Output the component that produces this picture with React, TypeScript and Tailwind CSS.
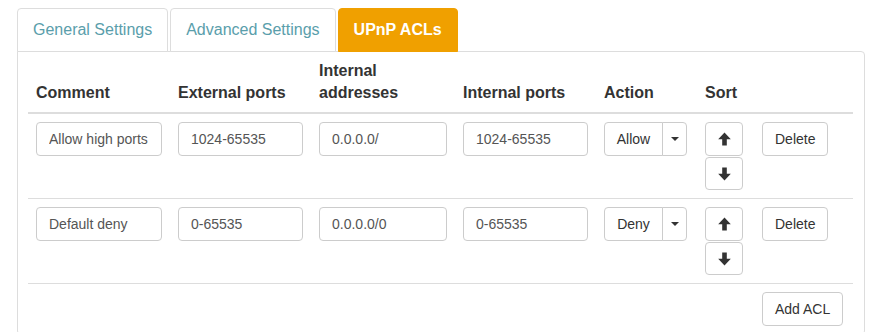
import { type ReactNode } from 'react';

/* UPnP ACL settings tab — bootstrap-ish table */

interface AclRule {
    comment: string;
    extPorts: string;
    intAddr: string;
    intPorts: string;
    action: string;
}

const rules: AclRule[] = [
    { comment: 'Allow high ports', extPorts: '1024-65535', intAddr: '0.0.0.0/', intPorts: '1024-65535', action: 'Allow' },
    { comment: 'Default deny', extPorts: '0-65535', intAddr: '0.0.0.0/0', intPorts: '0-65535', action: 'Deny' },
];

function ArrowUp() {
    return (
        <svg width="13" height="14" viewBox="0 0 13 14" className="fill-[#333]">
            <path d="M6.5 0.5 L12.8 7.2 L8.8 7.2 L8.8 13.5 L4.2 13.5 L4.2 7.2 L0.2 7.2 Z" />
        </svg>
    );
}

function ArrowDown() {
    return (
        <svg width="13" height="14" viewBox="0 0 13 14" className="fill-[#333]">
            <path d="M6.5 13.5 L12.8 6.8 L8.8 6.8 L8.8 0.5 L4.2 0.5 L4.2 6.8 L0.2 6.8 Z" />
        </svg>
    );
}

function Btn({ children, className = 'h-[34px]' }: { children: ReactNode; className?: string }) {
    return (
        <button
            className={`bg-white border border-[#ccc] rounded-[4px] text-[14px] text-[#333] leading-5 ${className}`}
        >
            {children}
        </button>
    );
}

function TextInput({ value }: { value: string }) {
    return (
        <input
            readOnly
            value={value}
            className="block w-full h-[34px] px-3 border border-[#ccc] rounded-[4px] text-[14px] text-[#555] bg-white outline-none"
        />
    );
}

export default function App() {
    const tabs = ['General Settings', 'Advanced Settings'];

    return (
        <div className="w-[877px] h-[332px] overflow-hidden bg-white pl-[17px] pt-[8px] font-['Liberation_Sans',Arial,sans-serif] text-[#333]">
            <ul className="flex gap-[2px] -mb-px relative z-10">
                {tabs.map((t) => (
                    <li
                        key={t}
                        className="px-[15px] py-[10px] leading-[22px] text-[16px] text-[#5a9eab] border border-[#ddd] rounded-t-[4px] bg-white"
                    >
                        {t}
                    </li>
                ))}
                <li className="px-[15px] py-[10px] leading-[22px] text-[16px] font-bold text-white bg-[#f0a000] border border-[#f0a000] rounded-t-[4px]">
                    UPnP ACLs
                </li>
            </ul>

            <div className="w-[848px] border border-[#ddd] rounded-b-[4px] rounded-tr-[4px] px-[10px]">
                <table className="w-[825px] table-fixed border-collapse">
                    <colgroup>
                        <col className="w-[142px]" />
                        <col className="w-[141px]" />
                        <col className="w-[144px]" />
                        <col className="w-[141px]" />
                        <col className="w-[101px]" />
                        <col className="w-[57px]" />
                        <col className="w-[99px]" />
                    </colgroup>
                    <thead>
                        <tr className="border-b-2 border-[#ddd]">
                            {['Comment', 'External ports', 'Internal addresses', 'Internal ports', 'Action', 'Sort', ''].map((h, i) => (
                                <th
                                    key={i}
                                    className="px-2 pt-2 pb-2 text-left align-bottom text-[16px] leading-[22px] font-bold"
                                >
                                    {h}
                                </th>
                            ))}
                        </tr>
                    </thead>
                    <tbody>
                        {rules.map((r) => (
                            <tr key={r.comment} className="border-b border-[#ddd]">
                                <td className="p-2 align-top">
                                    <TextInput value={r.comment} />
                                </td>
                                <td className="p-2 align-top">
                                    <TextInput value={r.extPorts} />
                                </td>
                                <td className="p-2 align-top">
                                    <TextInput value={r.intAddr} />
                                </td>
                                <td className="p-2 align-top">
                                    <TextInput value={r.intPorts} />
                                </td>
                                <td className="p-2 align-top">
                                    <div className="flex">
                                        <Btn className="h-[34px] rounded-r-none w-[59px]">{r.action}</Btn>
                                        <Btn className="h-[34px] rounded-l-none -ml-px w-[25px] flex items-center justify-center">
                                            <span className="block w-0 h-0 border-x-[4px] border-x-transparent border-t-[4px] border-t-[#333]" />
                                        </Btn>
                                    </div>
                                </td>
                                <td className="p-2 align-top">
                                    <div className="flex flex-col gap-[1px]">
                                        <Btn className="h-[34px] w-[38px] flex items-center justify-center">
                                            <ArrowUp />
                                        </Btn>
                                        <Btn className="h-[33px] w-[38px] flex items-center justify-center">
                                            <ArrowDown />
                                        </Btn>
                                    </div>
                                </td>
                                <td className="p-2 align-top">
                                    <Btn className="h-[34px] px-3">Delete</Btn>
                                </td>
                            </tr>
                        ))}
                        <tr>
                            <td colSpan={6} />
                            <td className="p-2 align-top">
                                <Btn className="h-[34px] px-3">Add ACL</Btn>
                            </td>
                        </tr>
                    </tbody>
                </table>
            </div>
        </div>
    );
}
